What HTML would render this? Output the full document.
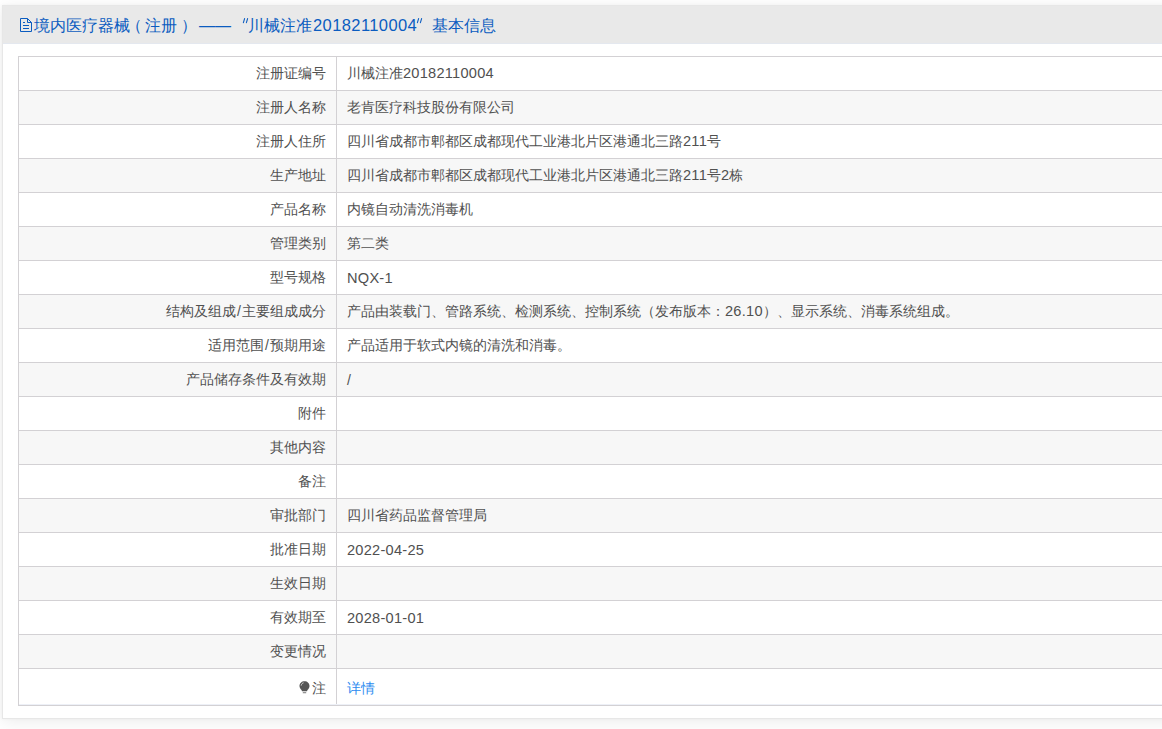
<!DOCTYPE html>
<html><head><meta charset="utf-8">
<style>
html,body{margin:0;padding:0;background:#fff;}
body{width:1162px;height:729px;overflow:hidden;position:relative;font-family:"Liberation Sans",sans-serif;}
.card{position:absolute;left:2px;top:5px;width:1200px;height:712px;background:#fff;border:1px solid #e7e7e7;box-shadow:0 3px 16px rgba(0,0,0,.08),0 0 3px rgba(0,0,0,.04);}
.hd{position:absolute;left:0;top:0;right:0;height:38px;background:#e9e9e9;border-bottom:1px solid #e4e8ef;box-sizing:border-box;}
.t{position:absolute;top:10px;font-size:16px;color:#0b5cc0;white-space:nowrap;line-height:20px;}
.ic{position:absolute;left:17px;top:12px;}
.q{position:absolute;}
.d{font-size:16.5px;letter-spacing:0.4px;top:9px;}
table{position:absolute;left:15px;top:50px;border-collapse:collapse;width:1200px;font-size:14px;color:#505050;}
td{border:1px solid #d3d1d4;height:34px;padding:1px 10px 0;box-sizing:border-box;white-space:nowrap;}
td.k{width:318px;text-align:right;}
tr:nth-child(even) td{background:#f7f7f7;}
tr.last td{height:37px;padding-top:3px;}
.n{font-size:14.6px;letter-spacing:0.25px;}
.sl{padding:0 1px;}
a{color:#2d8cf0;text-decoration:none;}
.bulb{display:inline-block;vertical-align:-1px;margin-right:2px;}
</style></head><body>
<div class="card">
<div class="hd">
<svg class="ic" width="14" height="16" viewBox="0 0 14 16"><path d="M0.5 0.5H7.5L11.5 4.5V13.5H0.5Z" fill="none" stroke="#0b5cc0" stroke-width="1"/><path d="M7.5 0.5V4.5H11.5" fill="none" stroke="#0b5cc0" stroke-width="1"/><path d="M3 4.5H5M3 7.5H9M3 10.5H9" stroke="#0b5cc0" stroke-width="1"/></svg>
<span class="t" style="left:31px">境内医疗器械</span>
<span class="t" style="left:123px">（</span>
<span class="t" style="left:142px">注册</span>
<span class="t" style="left:178px">）</span>
<span class="t" style="left:196px">——</span>
<svg class="q" style="left:239px;top:12px" width="8" height="6" viewBox="0 0 8 6"><path d="M2.6 0.6L1.4 4.6M5.6 0.6L4.4 4.6" stroke="#0b5cc0" stroke-width="1.1" stroke-linecap="round"/></svg>
<span class="t" style="left:245px">川械注准</span>
<span class="t d" style="left:310px">20182110004</span>
<svg class="q" style="left:413px;top:12px" width="8" height="6" viewBox="0 0 8 6"><path d="M2.6 0.6L1.4 4.6M5.6 0.6L4.4 4.6" stroke="#0b5cc0" stroke-width="1.1" stroke-linecap="round"/></svg>
<span class="t" style="left:429px">基本信息</span>
</div>
<table>
<tr><td class="k">注册证编号</td><td>川械注准<span class="n">20182110004</span></td></tr>
<tr><td class="k">注册人名称</td><td>老肯医疗科技股份有限公司</td></tr>
<tr><td class="k">注册人住所</td><td>四川省成都市郫都区成都现代工业港北片区港通北三路<span class="n">211</span>号</td></tr>
<tr><td class="k">生产地址</td><td>四川省成都市郫都区成都现代工业港北片区港通北三路<span class="n">211</span>号<span class="n">2</span>栋</td></tr>
<tr><td class="k">产品名称</td><td>内镜自动清洗消毒机</td></tr>
<tr><td class="k">管理类别</td><td>第二类</td></tr>
<tr><td class="k">型号规格</td><td><span class="n">NQX-1</span></td></tr>
<tr><td class="k">结构及组成<span class="sl">/</span>主要组成成分</td><td>产品由装载门、管路系统、检测系统、控制系统（发布版本：<span class="n">26.10</span>）、显示系统、消毒系统组成。</td></tr>
<tr><td class="k">适用范围<span class="sl">/</span>预期用途</td><td>产品适用于软式内镜的清洗和消毒。</td></tr>
<tr><td class="k">产品储存条件及有效期</td><td>/</td></tr>
<tr><td class="k">附件</td><td></td></tr>
<tr><td class="k">其他内容</td><td></td></tr>
<tr><td class="k">备注</td><td></td></tr>
<tr><td class="k">审批部门</td><td>四川省药品监督管理局</td></tr>
<tr><td class="k">批准日期</td><td><span class="n">2022-04-25</span></td></tr>
<tr><td class="k">生效日期</td><td></td></tr>
<tr><td class="k">有效期至</td><td><span class="n">2028-01-01</span></td></tr>
<tr><td class="k">变更情况</td><td></td></tr>
<tr class="last"><td class="k"><svg class="bulb" width="11" height="13" viewBox="0 0 11 13"><path d="M5.5 0.3C2.6 0.3 0.5 2.4 0.5 5.1C0.5 6.9 1.5 8.1 2.5 9L3 10.3H8L8.5 9C9.5 8.1 10.5 6.9 10.5 5.1C10.5 2.4 8.4 0.3 5.5 0.3Z" fill="#555"/><path d="M2.2 4.6C2.4 3.1 3.3 2.1 4.6 1.8" stroke="#fff" stroke-width="0.9" fill="none" opacity=".8"/><rect x="3.8" y="11.3" width="3.4" height="0.9" fill="#666"/></svg>注</td><td><a>详情</a></td></tr>
</table>
<div style="position:absolute;left:16px;top:698px;width:1200px;height:1px;background:#edf0f7"></div>
</div>
</body></html>
